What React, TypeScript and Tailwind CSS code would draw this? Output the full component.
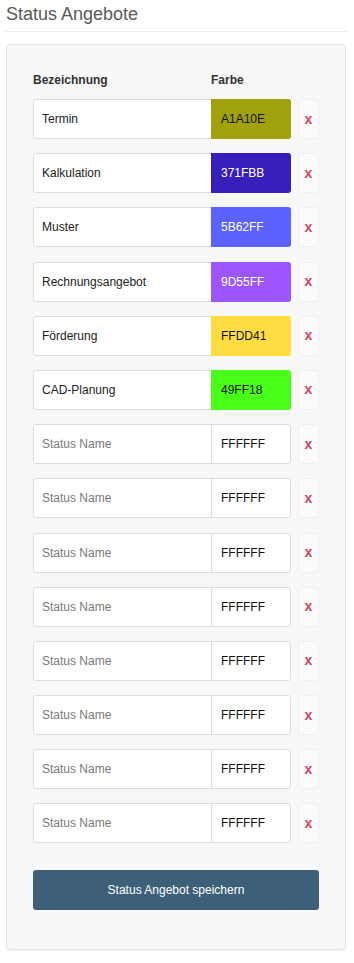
import React from "react";

const rows: { name: string; color: string; dark: boolean }[] = [
  { name: "Termin", color: "A1A10E", dark: false },
  { name: "Kalkulation", color: "371FBB", dark: true },
  { name: "Muster", color: "5B62FF", dark: true },
  { name: "Rechnungsangebot", color: "9D55FF", dark: true },
  { name: "Förderung", color: "FFDD41", dark: false },
  { name: "CAD-Planung", color: "49FF18", dark: false },
];

export default function App() {
  const all = [
    ...rows,
    ...Array.from({ length: 8 }, () => ({ name: "", color: "FFFFFF", dark: false })),
  ];
  return (
    <div className="w-[354px] bg-white pb-[13px]" style={{ fontFamily: '"Liberation Sans", Arial, sans-serif' }}>
      <div className="px-[5px]">
        <h2 className="pl-[1px] pt-[2px] text-[18px] leading-[24px] text-[#5a5a5a]">Status Angebote</h2>
        <div className="mt-[5px] h-px w-[343px] bg-[#eeeeee]" />
      </div>
      <div className="ml-[6px] mt-[12px] w-[340px] rounded-[4px] border border-[#e3e3e3] bg-[#f8f8f8] px-[26px] pt-[26px] pb-[39px] shadow-[0_1px_2px_rgba(0,0,0,0.06)]">
        <div className="flex h-[17px] items-center text-[12px] font-bold text-[#333]">
          <div className="w-[178px]">Bezeichnung</div>
          <div>Farbe</div>
        </div>
        <div className="mt-[11px] flex flex-col gap-[14.2px]">
          {all.map((r, i) => (
            <div key={i} className="flex h-[40px] items-stretch">
              <div className="flex w-[258px] rounded-[3px] border border-[#dcdcdc] bg-white">
                <div
                  className={
                    "flex w-[177px] items-center pl-[8px] text-[12px] " +
                    (r.name ? "text-[#222]" : "text-[#7a7a7a]")
                  }
                >
                  {r.name || "Status Name"}
                </div>
                <div
                  className={
                    "-my-px -mr-px flex flex-1 items-center rounded-r-[3px] border-l border-[#dcdcdc] pl-[9px] text-[12px] " +
                    (r.dark ? "text-white" : "text-[#111]")
                  }
                  style={r.color !== "FFFFFF" ? { backgroundColor: "#" + r.color, borderColor: "#" + r.color } : undefined}
                >
                  {r.color}
                </div>
              </div>
              <div className="ml-[7px] flex w-[21px] items-center justify-center rounded-[3px] border border-[#f0f0f0] bg-[#fbfbfb] text-[14px] font-bold text-[#d0435f]">
                x
              </div>
            </div>
          ))}
        </div>
        <button className="mt-[27px] flex h-[40px] w-[286px] items-center justify-center rounded-[3px] bg-[#3d5f78] text-[12px] text-white">
          Status Angebot speichern
        </button>
      </div>
    </div>
  );
}
